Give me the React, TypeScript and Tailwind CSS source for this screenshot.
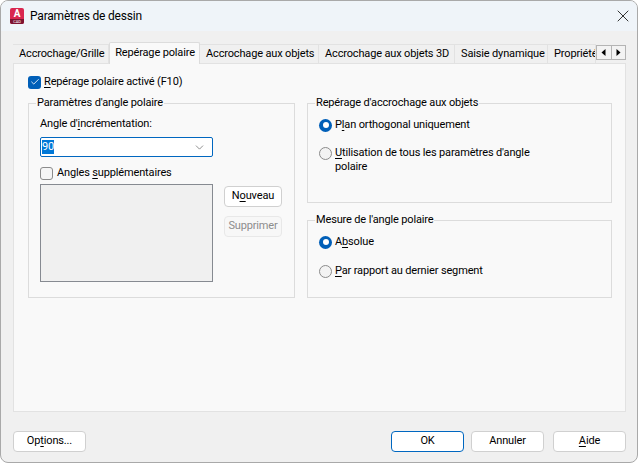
import React from 'react';
import { X, ChevronDown, Check } from 'lucide-react';

const font = 'font-["Roboto","Liberation_Sans",sans-serif]';

function Underline({ children }: { children: React.ReactNode }) {
  return <span className="underline underline-offset-2">{children}</span>;
}

function Tab({ label, width, active }: { label: string; width: string; active?: boolean }) {
  if (active) {
    return (
      <div className={`${width} relative z-10 -mb-px flex h-[22px] shrink-0 items-center justify-center whitespace-nowrap rounded-t-[2px] border border-b-0 border-[#dcdcdc] bg-[#f9f9f9] pl-[1px]`}>
        {label}
      </div>
    );
  }
  return (
    <div className={`${width} flex h-[19px] shrink-0 items-center overflow-hidden whitespace-nowrap border border-b-0 border-l-0 border-[#e2e2e2] bg-[#f0f0f0] pl-[6px]`}>
      {label}
    </div>
  );
}

function Radio({ checked }: { checked?: boolean }) {
  if (checked) {
    return (
      <span className="flex h-[13px] w-[13px] shrink-0 items-center justify-center rounded-full bg-[#005fb8]">
        <span className="h-[6px] w-[6px] rounded-full bg-white" />
      </span>
    );
  }
  return <span className="block h-[13px] w-[13px] shrink-0 rounded-full border border-[#8b8b8b] bg-[#f3f3f3]" />;
}

function Group({ title, className, children }: { title: string; className: string; children: React.ReactNode }) {
  return (
    <fieldset className={`${className} min-w-0 border border-[#dcdcdc]`}>
      <legend className="ml-[-4px] px-[1px] leading-[16px]">{title}</legend>
      {children}
    </fieldset>
  );
}

function Button({ children, className, disabled }: { children: React.ReactNode; className: string; disabled?: boolean }) {
  return (
    <button
      className={`${className} flex items-center justify-center rounded-[4px] border ${
        disabled ? 'border-[#e8e8e8] bg-[#f7f7f7] text-[#8c8c8c]' : 'border-[#d0d0d0] bg-white text-black'
      }`}
    >
      {children}
    </button>
  );
}

function Arrow({ left }: { left?: boolean }) {
  return (
    <svg width="5" height="7" viewBox="0 0 5 7" className="text-black">
      <path d={left ? 'M4.5 0 L0.5 3.5 L4.5 7 Z' : 'M0.5 0 L4.5 3.5 L0.5 7 Z'} fill="currentColor" />
    </svg>
  );
}

export default function App() {
  return (
    <div className={`${font} h-[464px] w-[639px] overflow-hidden bg-white text-[11px] tracking-[-0.15px] text-black`}>
      <div className="flex h-[463px] w-[638px] flex-col overflow-hidden rounded-[8px] border border-[#a9a9a9] bg-[#f0f0f0]">
        {/* title bar */}
        <div className="flex h-[30px] shrink-0 items-center bg-[#eff4f9] pl-[9px] pr-[4px]">
          <div className="flex h-[16px] w-[14px] flex-col overflow-hidden rounded-[2px] bg-[#d9264f]">
            <span className="flex h-[11px] items-center justify-center text-[10px] font-bold leading-none text-white">A</span>
            <span className="flex flex-1 items-center justify-center bg-[#7d1230] text-[4px] leading-none text-white">CAD</span>
          </div>
          <span className="ml-[6px] flex-1 text-[12px] tracking-[-0.2px] text-black">Paramètres de dessin</span>
          <X className="h-[20px] w-[20px] text-[#333]" strokeWidth={1.2} />
        </div>

        <div className="flex min-h-0 flex-1 flex-col pl-[12px] pr-[11px]">
          {/* tabs */}
          <div className="relative mt-[11px] flex items-end">
            <Tab label="Accrochage/Grille" width="w-[96px]" />
            <Tab label="Repérage polaire" width="w-[91px]" active />
            <Tab label="Accrochage aux objets" width="w-[119px]" />
            <Tab label="Accrochage aux objets 3D" width="w-[136px]" />
            <Tab label="Saisie dynamique" width="w-[93px]" />
            <Tab label="Propriétés rapides" width="w-[48px]" />
            <div className="mt-[3px] flex h-[15px] flex-1 self-start">
              <div className="flex flex-1 items-center justify-center border border-[#b4b4b4] bg-[#f3f3f3]"><Arrow left /></div>
              <div className="flex flex-1 items-center justify-center border border-l-0 border-[#b4b4b4] bg-[#f3f3f3]"><Arrow /></div>
            </div>
          </div>

          {/* tab page */}
          <div className="h-[349px] shrink-0 border border-[#e2e2e2] bg-[#f9f9f9] pl-[14px] pr-[13px] pt-[10px]">
            <div className="flex h-[16px] items-center">
              <span className="flex h-[13px] w-[13px] items-center justify-center rounded-[3px] bg-[#005fb8]">
                <Check className="h-[10px] w-[10px] text-white" strokeWidth={2} />
              </span>
              <span className="ml-[3px]"><Underline>R</Underline>epérage polaire activé (F10)</span>
            </div>

            <div className="mt-[5px] flex gap-[12px]">
              <Group title="Paramètres d'angle polaire" className="h-[203px] w-[267px] px-[11px]">
                <div className="mt-[5px] leading-[16px]">Angle d'<Underline>i</Underline>ncrémentation:</div>
                <div className="mt-[5px] flex h-[20px] w-[173px] items-center justify-between rounded-[2px] border border-[#0067c0] bg-white pl-[1px] pr-[6px]">
                  <span className="bg-[#0078d7] leading-[14px] text-white">90</span>
                  <ChevronDown className="h-[13px] w-[13px] text-[#555]" strokeWidth={1.2} />
                </div>
                <div className="mt-[9px] flex h-[15px] items-center">
                  <span className="h-[13px] w-[13px] rounded-[3px] border border-[#8b8b8b] bg-[#f5f5f5]" />
                  <span className="ml-[4px]">Angles <Underline>s</Underline>upplémentaires</span>
                </div>
                <div className="mt-[3px] flex gap-[11px]">
                  <div className="h-[98px] w-[173px] border border-[#868a91] bg-[#f0f0f0]" />
                  <div className="flex flex-col gap-[9px] pt-[2px]">
                    <Button className="h-[21px] w-[58px]">N<Underline>o</Underline>uveau</Button>
                    <Button className="h-[21px] w-[58px]" disabled>Supprimer</Button>
                  </div>
                </div>
              </Group>

              <div className="flex flex-1 flex-col gap-[9px]">
                <Group title="Repérage d'accrochage aux objets" className="h-[108px] w-[305px] px-[11px]">
                  <div className="mt-[6px] flex items-center gap-[3px] leading-[16px]">
                    <Radio checked />
                    <span>P<Underline>l</Underline>an orthogonal uniquement</span>
                  </div>
                  <div className="mt-[13px] flex items-start gap-[3px] leading-[14px]">
                    <span className="mt-[1px]"><Radio /></span>
                    <span className="w-[210px]"><Underline>U</Underline>tilisation de tous les paramètres d'angle polaire</span>
                  </div>
                </Group>
                <Group title="Mesure de l'angle polaire" className="h-[86px] w-[305px] px-[11px]">
                  <div className="mt-[6px] flex items-center gap-[3px] leading-[16px]">
                    <Radio checked />
                    <span>A<Underline>b</Underline>solue</span>
                  </div>
                  <div className="mt-[13px] flex items-center gap-[3px] leading-[16px]">
                    <Radio />
                    <span><Underline>P</Underline>ar rapport au dernier segment</span>
                  </div>
                </Group>
              </div>
            </div>
          </div>

          {/* footer */}
          <div className="mt-[19px] flex">
            <Button className="mr-auto h-[21px] w-[73px]">Op<Underline>t</Underline>ions...</Button>
            <Button className="h-[21px] w-[73px] !border-[#0067c0]">OK</Button>
            <Button className="ml-[7px] h-[21px] w-[73px]">Annuler</Button>
            <Button className="ml-[9px] h-[21px] w-[73px]"><Underline>A</Underline>ide</Button>
          </div>
        </div>
      </div>
    </div>
  );
}
